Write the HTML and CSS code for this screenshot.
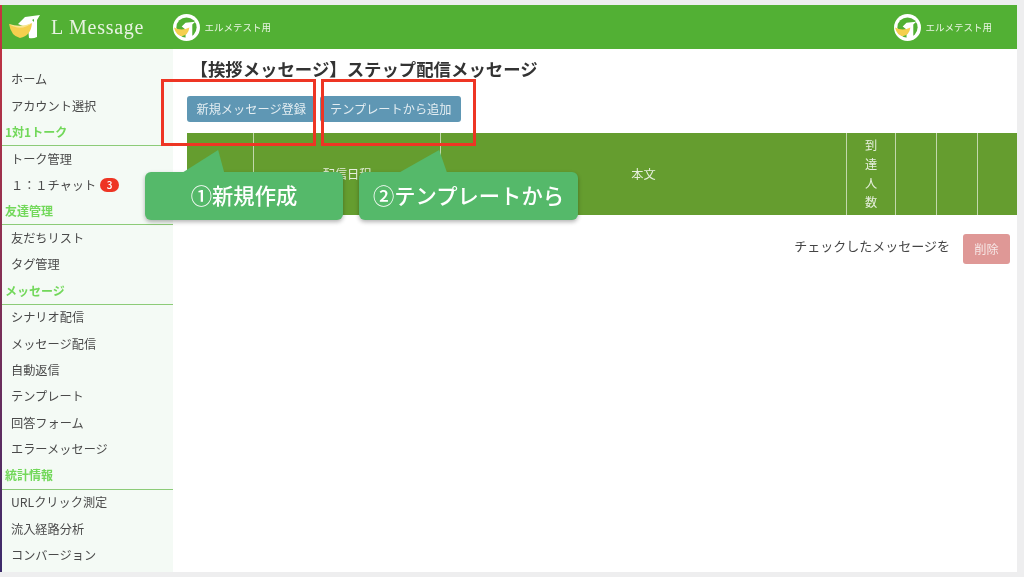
FILE: index.html
```html
<!DOCTYPE html>
<html lang="ja">
<head>
<meta charset="utf-8">
<title>L Message</title>
<link rel="stylesheet" href="styles.css">
</head>
<body>
<div class="frame">
  <header class="topbar">
    <div class="brand">
      <svg class="brand-logo" viewBox="0 0 32 24"><path fill="#fff" d="M9 9 L16 2 L31 0 L28 5 L28 22 Q24 24 20 23 L19 13 Z"/><path fill="#52b034" d="M23 5 L25 4 L25 7 Z"/><path fill="#f5cf4e" d="M0 9 Q12 15 23 8 Q22 21 11 23 Q2 21 0 9 Z"/><path fill="#f9e58f" d="M0 9 Q12 13 23 8 Q12 17 0 9 Z"/></svg>
      <span class="brand-name">L Message</span>
    </div>
    <div class="account">
      <svg class="account-logo" viewBox="0 0 28 28"><circle cx="14" cy="14" r="14" fill="#fff"/><circle cx="14" cy="14" r="10.5" fill="#52b034"/><path fill="#fff" d="M9 13 L13 9 L23 8 L20 11 L20 27 L13 27 L13 16 Z"/><path fill="#f5cf4e" d="M1 14 Q9 18 17 14 Q16 22 9 23 Q3 22 1 14 Z"/></svg>
      <span>エルメテスト用</span>
    </div>
    <div class="account account-right">
      <svg class="account-logo" viewBox="0 0 28 28"><circle cx="14" cy="14" r="14" fill="#fff"/><circle cx="14" cy="14" r="10.5" fill="#52b034"/><path fill="#fff" d="M9 13 L13 9 L23 8 L20 11 L20 27 L13 27 L13 16 Z"/><path fill="#f5cf4e" d="M1 14 Q9 18 17 14 Q16 22 9 23 Q3 22 1 14 Z"/></svg>
      <span>エルメテスト用</span>
    </div>
  </header>
  <div class="body">
    <nav class="sidebar">
      <a class="item">ホーム</a>
      <a class="item">アカウント選択</a>
      <h3 class="heading">1対1トーク</h3>
      <a class="item">トーク管理</a>
      <a class="item">１：１チャット<span class="badge">3</span></a>
      <h3 class="heading">友達管理</h3>
      <a class="item">友だちリスト</a>
      <a class="item">タグ管理</a>
      <h3 class="heading">メッセージ</h3>
      <a class="item">シナリオ配信</a>
      <a class="item">メッセージ配信</a>
      <a class="item">自動返信</a>
      <a class="item">テンプレート</a>
      <a class="item">回答フォーム</a>
      <a class="item">エラーメッセージ</a>
      <h3 class="heading">統計情報</h3>
      <a class="item">URLクリック測定</a>
      <a class="item">流入経路分析</a>
      <a class="item">コンバージョン</a>
    </nav>
    <main class="content">
      <h1 class="title">【挨拶メッセージ】ステップ配信メッセージ</h1>
      <div class="actions">
        <button class="btn">新規メッセージ登録</button>
        <button class="btn">テンプレートから追加</button>
      </div>
      <div class="table-head">
        <div class="cell"></div>
        <div class="cell">配信日程</div>
        <div class="cell">本文</div>
        <div class="cell">到<br>達<br>人<br>数</div>
        <div class="cell"></div>
        <div class="cell"></div>
        <div class="cell"></div>
      </div>
      <div class="bulk">
        <span class="bulk-label">チェックしたメッセージを</span>
        <button class="btn-delete">削除</button>
      </div>
    </main>
  </div>
</div>
<div class="mark mark-one"></div>
<div class="mark mark-two"></div>
<div class="callout callout-one"><svg class="tail tail-one" viewBox="0 0 50 26"><path d="M0 26 L41 0 L48 26 Z"/></svg>①新規作成</div>
<div class="callout callout-two"><svg class="tail tail-two" viewBox="0 0 60 26"><path d="M0 26 L46 0 L55 26 Z"/></svg>②テンプレートから</div>
</body>
</html>
```
FILE: styles.css
```css
* { box-sizing: border-box; }
html, body { margin: 0; height: 100%; }
html { background: #eeeeef; overflow: hidden; }
body {
  width: 1024px;
  height: 577px;
  overflow: hidden;
  background: #eeeeef;
  font-family: "Noto Sans CJK JP", "Noto Sans", sans-serif;
  color: #444;
  position: relative;
  padding: 5px 7px 5px 0;
  filter: blur(0.35px);
}
.frame {
  height: 100%;
  display: flex;
  flex-direction: column;
  background: #fff;
  border-left: 2px solid #b0304f;
  border-image: linear-gradient(#c8343f, #3b2a6b) 1;
}
.topbar {
  height: 44px;
  flex: none;
  background: #52b034;
  display: flex;
  align-items: center;
  color: #eaf5e4;
  font-size: 9.5px;
}
.brand { width: 171px; display: flex; align-items: center; padding-left: 7px; gap: 10px; }
.brand-logo { width: 32px; height: 24px; flex: none; }
.brand-name { font-family: "Liberation Serif", serif; font-size: 20px; letter-spacing: 0.75px; color: #e8f3e2; }
.account { display: flex; align-items: center; gap: 4.5px; }
.account-logo { width: 27px; height: 27px; flex: none; }
.account-right { margin-left: auto; margin-right: 25px; }
.body { flex: 1; display: flex; min-height: 0; }
.sidebar {
  width: 171px;
  flex: none;
  background: #f4faf5;
  padding-top: 17px;
  display: flex;
  flex-direction: column;
  overflow: hidden;
}
.item {
  height: 26.4px;
  flex: none;
  display: flex;
  align-items: center;
  padding-left: 9px;
  font-size: 12.2px;
  color: #4a4a4a;
}
.heading {
  height: 27.2px;
  flex: none;
  margin: 0 0 -0.6px;
  padding: 0 0 0 3px;
  border-bottom: 1.5px solid #8ccb78;
  font-size: 12px;
  font-weight: 700;
  line-height: 26px;
  color: #72d85a;
}
.badge {
  width: 19px;
  height: 14px;
  margin-left: 4px;
  border-radius: 7px;
  background: #ee3524;
  color: #fff;
  font-size: 10px;
  font-weight: 500;
  text-align: center;
  line-height: 14px;
}
.content { flex: 1; padding: 8px 0 0 14px; min-width: 0; }
.title { margin: 0; height: 24px; padding-left: 3.5px; font-size: 17.4px; font-weight: 700; line-height: 24px; color: #333; white-space: nowrap; }
.actions { display: flex; gap: 5px; margin-top: 15px; }
.btn {
  height: 26px;
  padding: 0 9.5px;
  border: 0;
  border-radius: 3px;
  background: #5f97b4;
  color: #e3edf2;
  font: 12.2px "Noto Sans CJK JP", sans-serif;
}
.table-head {
  display: grid;
  grid-template-columns: 66px 187px 406px 49px 41px 41px 40px;
  height: 82px;
  margin-top: 11px;
  background: #659d2f;
  color: #e6efdc;
  font-size: 12.2px;
}
.cell {
  display: flex;
  align-items: center;
  justify-content: center;
  text-align: center;
  border-left: 1px solid #c2d8ac;
  line-height: 19px;
}
.cell:first-child { border-left: 0; }
.bulk {
  display: flex;
  justify-content: flex-end;
  align-items: center;
  gap: 13px;
  margin: 19px 7px 0 0;
  font-size: 13px;
  color: #444;
}
.bulk-label { margin-bottom: 8px; }
.btn-delete {
  width: 47px;
  height: 30px;
  border: 0;
  border-radius: 3px;
  background: #df9896;
  color: #f6e6e5;
  font: 12.2px "Noto Sans CJK JP", sans-serif;
}
.mark {
  position: absolute;
  top: 79px;
  width: 155px;
  height: 67px;
  border: 3px solid #ee3524;
}
.mark-one { left: 161px; }
.mark-two { left: 321px; }
.callout {
  position: absolute;
  top: 172px;
  height: 48px;
  padding-bottom: 3px;
  border-radius: 6px;
  background: #55b96a;
  box-shadow: 0 2px 4px rgba(0,0,0,.3);
  color: #fff;
  font-size: 21.3px;
  font-weight: 500;
  display: flex;
  align-items: center;
  justify-content: center;
}
.callout-one { left: 145px; width: 198px; }
.callout-two { left: 359px; width: 219px; }
.tail { position: absolute; bottom: 47px; height: 23px; fill: #55b96a; }
.tail-one { left: 34px; width: 50px; }
.tail-two { left: 36px; width: 60px; }
```
